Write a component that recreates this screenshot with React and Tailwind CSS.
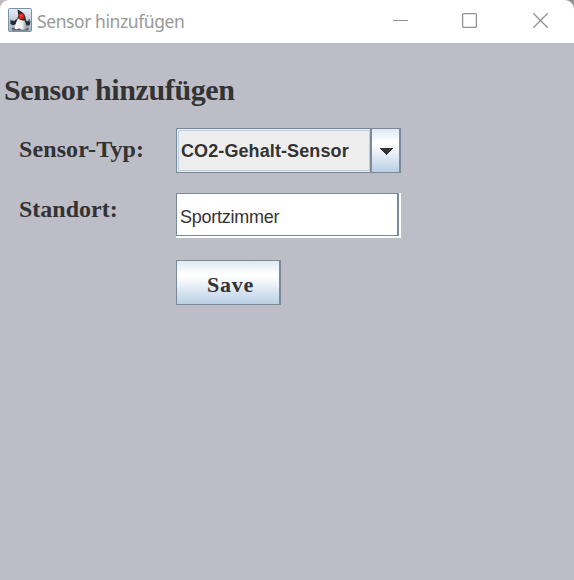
function DukeIcon() {
  return (
    <svg className="ml-2 h-6 w-6 shrink-0" viewBox="0 0 24 24">
      <defs>
        <linearGradient id="tile" x1="0" y1="0" x2="0" y2="1">
          <stop offset="0" stopColor="#e9eef8" />
          <stop offset="1" stopColor="#a3aec0" />
        </linearGradient>
        <linearGradient id="belly" x1="0" y1="0" x2="1" y2="0">
          <stop offset="0" stopColor="#ffffff" />
          <stop offset="0.6" stopColor="#eeefee" />
          <stop offset="1" stopColor="#8c8f92" />
        </linearGradient>
      </defs>
      <rect x="0.5" y="0.5" width="23" height="23" rx="1" fill="url(#tile)" stroke="#7793aa" />
      <path d="M3.5 19.800h17.500l-1 2.700H4.500z" fill="#59616d" />
      <path d="M9.500 10.500 6 13 2.400 11.700v4.300l2.600 1.200 4-1.400zM16.500 11l3 2.400 2.200-2.400.8 3-1 3.200-2.500.6-2.500-2z" fill="#222a32" />
      <path d="M2.200 12.200l3.200.8M20.800 11.200l1.200 3.200" stroke="#5d8299" strokeWidth="1.2" />
      <path d="M9.400 1.400c2 .9 5.300 2.400 7 5.200 1.100 2 1.200 4.400 2 7.400L8.600 13c.8-2.600 1.400-4.600 1.700-6.600z" fill="#29292a" />
      <path d="M10.200 10.200C8.400 13 7.100 17.500 6.700 20.600c1.300 1 2.600.6 4.200-.4 1.800.8 2.400 1.500 4 1.500s2.600-.4 4-.6c.1-3.300-.8-6-2.500-8.900-1.600.6-4.400 0-6.200-2z" fill="url(#belly)" />
      <circle cx="13.300" cy="8.400" r="2.800" fill="#ea1b17" />
      <circle cx="12.800" cy="7.500" r="1" fill="#ff4d42" />
    </svg>
  );
}

function TitleBar() {
  return (
    <header className="flex h-[43px] items-start rounded-t-[9px] bg-white">
      <div className="flex h-10 flex-1 items-center">
        <DukeIcon />
        <span className="ml-[5px] mt-[2px] font-['Noto_Sans',sans-serif] text-[17.5px] leading-6 tracking-[-0.42px] text-[#999]">
          Sensor hinzufügen
        </span>
      </div>
      <svg className="h-10 w-[182px] shrink-0" viewBox="0 0 182 40" fill="none" stroke="#929292">
        <path d="M1 20.5h15" />
        <rect x="70.6" y="13.6" width="13.8" height="13.8" rx="1.2" strokeWidth="1.3" />
        <path d="M141.3 13.3l14.4 14.4M155.7 13.3l-14.4 14.4" strokeWidth="1.3" />
      </svg>
    </header>
  );
}

function SensorSelect() {
  return (
    <div className="flex h-[45px] w-[225px] border border-r-2 border-[#7a8a99]">
      <div className="flex w-[193px] border border-r-0 border-[#e4ebf2]">
        <div className="flex flex-1 items-center border border-[#b8cfe5] bg-[#eee]">
          <span className="ml-[2px] mt-px whitespace-nowrap font-['Liberation_Sans',sans-serif] text-[18px] font-bold leading-5 tracking-[0.1px] text-[#333]">
            CO2-Gehalt-Sensor
          </span>
        </div>
      </div>
      <div className="flex flex-1 items-center justify-center border-l-2 border-[#7a8a99] bg-[linear-gradient(#dde8f3_0%,#ffffff_30%,#ffffff_36%,#b8cfe5_100%)]">
        <svg className="ml-[2px] mt-[2px] h-[7px] w-[15px]" viewBox="0 0 15 7" shapeRendering="crispEdges">
          <path d="M0 0h15l-7.5 7z" fill="#333" />
        </svg>
      </div>
    </div>
  );
}

function LocationField() {
  return (
    <div className="h-[45px] w-[225px] border-b-2 border-r-2 border-white bg-white">
      <div className="flex h-[43px] items-center border border-r-2 border-[#7a8a99] pt-[5px]">
        <span className="ml-[3px] font-['Liberation_Sans',sans-serif] text-[18px] font-normal leading-5 tracking-[-0.26px] text-[#333]">
          Sportzimmer
        </span>
      </div>
    </div>
  );
}

export default function App() {
  return (
    <div className="h-[580px] w-[574px] bg-[#bdbdc8]">
      <div className="bg-[linear-gradient(90deg,#bdbdc0,#bdbdc0_50%,#929296)]">
        <TitleBar />
      </div>
      <main className="font-['Liberation_Serif',serif] font-bold text-[#333]">
        <h1 className="ml-1 pt-[30px] text-[30px] leading-[34px] tracking-[-0.38px]">Sensor hinzufügen</h1>
        <div className="ml-[19px] mt-[21px] grid grid-cols-[157px_225px] gap-y-5 text-[24px] leading-7">
          <label className="pt-[7px] tracking-[0.1px]">Sensor-Typ:</label>
          <SensorSelect />
          <label className="pt-[2px]">Standort:</label>
          <LocationField />
        </div>
        <button className="ml-44 mt-[22px] flex h-[45px] w-[105px] items-center justify-center border border-r-2 border-[#7a8a99] bg-[linear-gradient(#dde8f3_0%,#ffffff_30%,#ffffff_36%,#b8cfe5_100%)] pl-[5px] pt-1 text-[22px] font-bold tracking-[0.7px]">
          Save
        </button>
      </main>
    </div>
  );
}
